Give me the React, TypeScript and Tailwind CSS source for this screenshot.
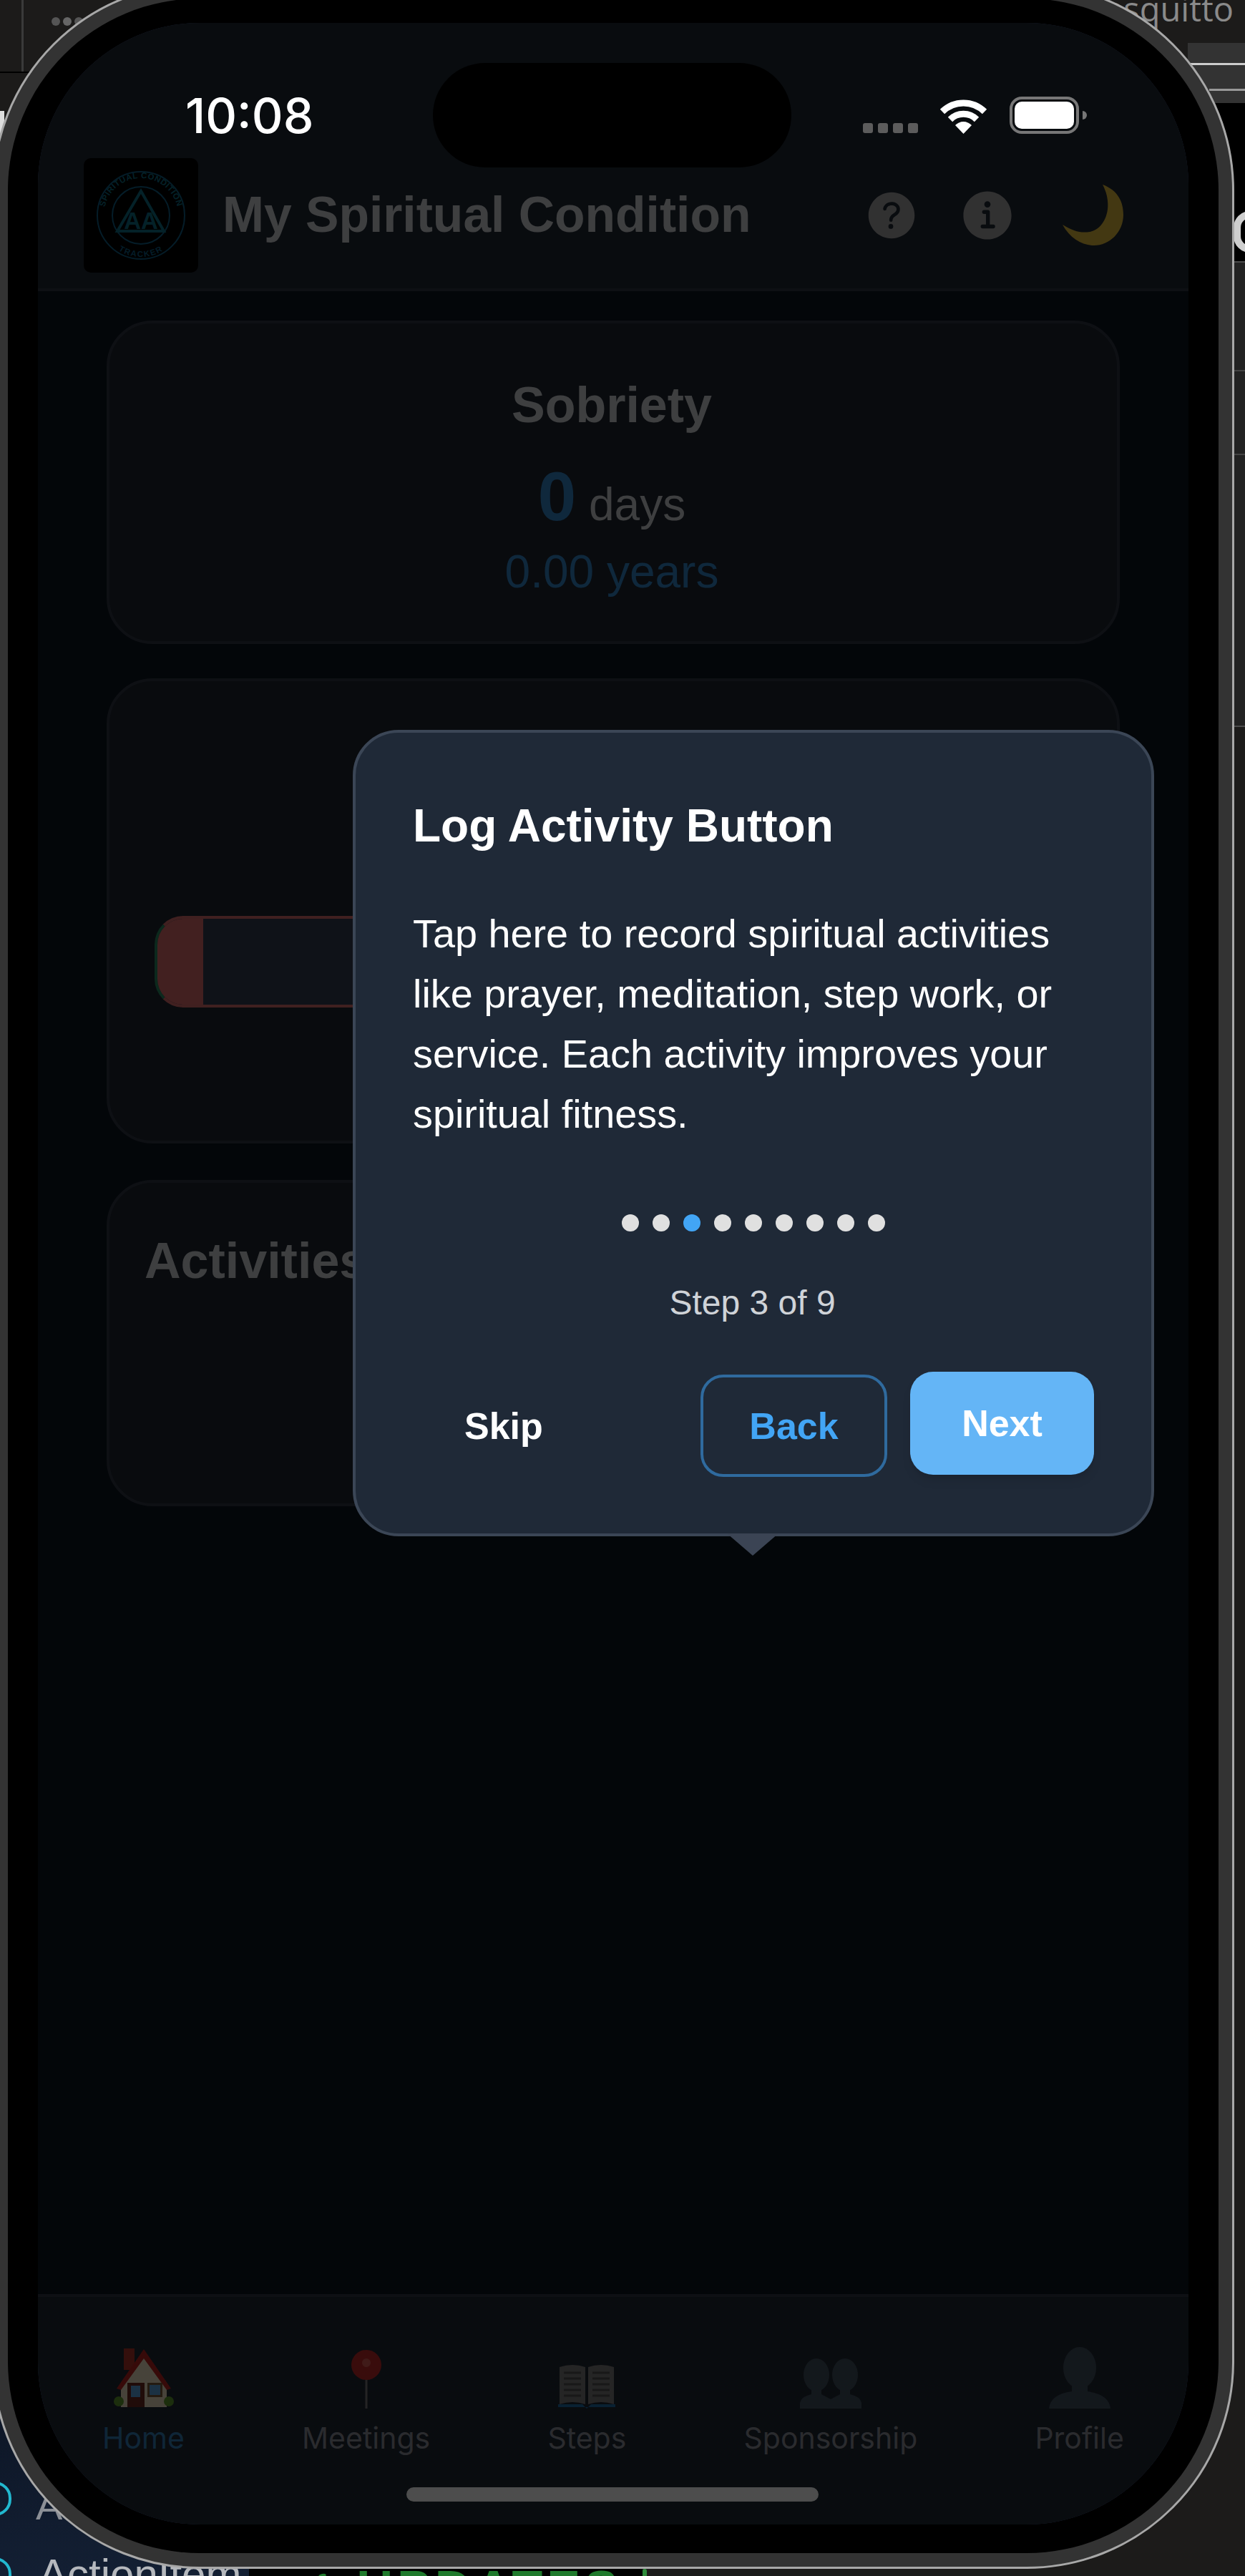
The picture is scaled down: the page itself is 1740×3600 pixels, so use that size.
import React from 'react';
import { IoHelpCircle, IoInformationCircle } from 'react-icons/io5';

const HouseIcon = () => (
  <svg width="84" height="86" viewBox="0 0 84 86">
    <rect x="14" y="2" width="15" height="30" fill="#b03228" />
    <path d="M42 6 L74 50 V84 H10 V50 Z" fill="#efe0c2" />
    <path d="M42 3 L80 58 L74 60 L42 16 L10 60 L4 58 Z" fill="#b82420" />
    <rect x="19" y="50" width="24" height="34" fill="#6d2b1f" />
    <rect x="24" y="54" width="13" height="16" fill="#5aa5e0" />
    <rect x="47" y="50" width="21" height="20" fill="#7a5a3a" />
    <rect x="50" y="53" width="15" height="14" fill="#5aa5e0" />
    <circle cx="7" cy="76" r="7" fill="#5f9a2e" />
    <circle cx="77" cy="76" r="7" fill="#5f9a2e" />
  </svg>
);

const PinIcon = () => (
  <svg width="44" height="82" viewBox="0 0 44 82">
    <rect x="20.5" y="38" width="3" height="44" fill="#7a7a7a" />
    <circle cx="22" cy="21" r="21" fill="#c02a28" />
    <circle cx="22" cy="18" r="6" fill="#d85a55" />
  </svg>
);

const BookIcon = () => (
  <svg width="80" height="64" viewBox="0 0 80 64">
    <path d="M2 6 Q20 0 38 6 V58 Q20 52 2 58 Z" fill="#7c7c7c" />
    <path d="M42 6 Q60 0 78 6 V58 Q60 52 42 58 Z" fill="#7c7c7c" />
    <path d="M0 58 H34 L40 64 L46 58 H80 V62 H0 Z" fill="#1f6fa8" />
    <path d="M8 14 H32 M8 22 H32 M8 30 H32 M8 38 H32 M8 46 H32 M48 14 H72 M48 22 H72 M48 30 H72 M48 38 H72 M48 46 H72" stroke="#505050" strokeWidth="3" />
  </svg>
);

const tabs = [
  { label: 'Home', icon: <HouseIcon />, active: true },
  { label: 'Meetings', icon: <PinIcon /> },
  { label: 'Steps', icon: <BookIcon /> },
  {
    label: 'Sponsorship',
    icon: (
      <svg width="86" height="70" viewBox="0 0 86 70" fill="#40505e">
        <ellipse cx="23" cy="23" rx="18" ry="23" />
        <ellipse cx="63" cy="23" rx="18" ry="23" />
        <path d="M16 40 H30 V50 L43 57 L56 50 V40 H70 V50 Q84 53 86 62 V70 H0 V62 Q2 53 16 50 Z" />
      </svg>
    ),
  },
  {
    label: 'Profile',
    icon: (
      <svg width="86" height="86" viewBox="0 0 86 86" fill="#40505e">
        <ellipse cx="43" cy="29" rx="23" ry="29" />
        <path d="M32 50 H54 V62 Q84 66 86 86 H0 Q2 66 32 62 Z" />
      </svg>
    ),
  },
];

const Logo = () => (
  <svg width="160" height="160" viewBox="0 0 160 160" className="rounded-[10px] bg-black">
    <defs>
      <path id="logo-top" d="M28 80 A52 52 0 0 1 132 80" />
      <path id="logo-bottom" d="M22 80 A58 58 0 0 0 138 80" />
    </defs>
    <circle cx="80" cy="80" r="61" fill="none" stroke="#0e5f86" strokeWidth="2" />
    <circle cx="80" cy="80" r="40" fill="none" stroke="#0e5f86" strokeWidth="2" />
    <path d="M80 46 L112 102 H47 Z" fill="none" stroke="#0f7088" strokeWidth="4" />
    <text x="80" y="99" textAnchor="middle" fontSize="33" fontWeight="700" fill="#0f7088">AA</text>
    <text fontSize="11.5" fontWeight="700" fill="#0f7088" letterSpacing="0.6">
      <textPath href="#logo-top" startOffset="50%" textAnchor="middle">SPIRITUAL CONDITION</textPath>
    </text>
    <text fontSize="11.5" fontWeight="700" fill="#0e5f86" letterSpacing="1.5">
      <textPath href="#logo-bottom" startOffset="50%" textAnchor="middle">TRACKER</textPath>
    </text>
  </svg>
);

// backdrop pieces of the desktop that stick out around the phone
const Desktop = () => (
  <>
    <div className="absolute left-0 top-0 flex w-[130px] flex-col">
      <div className="flex h-[102px] w-[50px] shrink-0 border-b-2 border-black pl-[30px]">
        <div className="h-full w-[3px] bg-[#3a3a3a]" />
      </div>
      <div className="mt-[53px] h-[40px] w-[6px] bg-[#ddd]" />
    </div>
    <div className="absolute left-[72px] top-[24px] flex gap-[4px]">
      <div className="h-[12px] w-[12px] rounded-full bg-[#555]" />
      <div className="h-[12px] w-[12px] rounded-full bg-[#666]" />
      <div className="h-[12px] w-[12px] rounded-full bg-[#555]" />
    </div>

    <div className="absolute right-[16px] top-[-23px] text-[47px] text-[#8a8a8a] [font-family:'Open_Sans',sans-serif]">mosquitto</div>

    <div className="absolute right-0 top-[60px] flex w-[80px] flex-col">
      <div className="flex h-[84px] flex-col items-end gap-[33px] bg-[#333] pt-[28px]">
        <div className="h-[3px] w-full bg-[#ccc]" />
        <div className="h-[3px] w-[50px] bg-[#999]" />
      </div>
      <div className="flex h-[221px] justify-end overflow-hidden bg-black pt-[151px]">
        <div className="mr-[-30px] h-[58px] w-[46px] rounded-full border-[10px] border-[#cfcfcf]" />
      </div>
      <div className="flex h-[651px] flex-col border-y-2 border-[#4c4c4c] bg-[#222]">
        <div className="h-[152px] border-b-2 border-[#444]" />
        <div className="h-[117px] border-b-2 border-[#444]" />
      </div>
    </div>

    <div className="absolute bottom-0 left-0 flex items-end">
      <div className="flex h-[320px] w-[348px] flex-col overflow-hidden bg-gradient-to-b from-[#0b1322] to-[#131f33] pt-[188px]">
        <div className="flex h-[48px] items-start">
          <div className="ml-[-30px] h-[48px] w-[46px] rounded-full border-[4px] border-[#22b8cf]" />
          <div className="ml-[34px] mt-[-8px] text-[56px] text-[#8b8f96]">A</div>
        </div>
        <div className="mt-[58px] flex items-start">
          <div className="ml-[-30px] h-[48px] w-[46px] rounded-full border-[4px] border-[#22b8cf]" />
          <div className="ml-[38px] mt-[-11px] text-[60px] leading-[70px] text-[#b5b8bd]">ActionItem</div>
        </div>
      </div>
      <div className="h-[12px] w-[550px] overflow-hidden bg-black">
        <div className="mt-[-10px] pl-[60px] text-[70px] font-bold leading-[80px] tracking-[6px] text-[#1f7a2c]">✓ UPDATES</div>
      </div>
      <div className="h-[10px] w-[6px] rounded-t-full bg-[#2e8b3a]" />
    </div>
  </>
);

const App: React.FC = () => {
  const dots = [0, 1, 2, 3, 4, 5, 6, 7, 8];

  return (
    <div className="relative h-[3600px] w-[1740px] overflow-hidden bg-[#1c1b1a] [font-family:'Liberation_Sans',Arial,sans-serif]">
      <Desktop />

      {/* phone: light rim, gray band, black bezel, screen */}
      <div className="relative ml-[-11px] mt-[-24px] h-[3614px] w-[1736px] rounded-[290px] border-[3px] border-[#a8a8a8] bg-[#333] p-[19px]">
        <div className="h-full w-full rounded-[268px] bg-black pb-[39px] pl-[42px] pr-[41px] pt-[34px]">
          <div className="relative flex h-[3496px] w-[1608px] flex-col overflow-hidden rounded-[227px] bg-[#0d1421]">
            {/* header */}
            <header className="flex h-[375px] shrink-0 items-center border-b-4 border-[#2f3643] bg-[#212835] pl-[64px] pr-[90px] pt-[166px]">
              <Logo />
              <h1 className="ml-[34px] text-[69.6px] font-bold leading-none text-[#cfd2d5]">My Spiritual Condition</h1>
              <div className="ml-auto flex items-center">
                <IoHelpCircle className="text-[86px] text-[#a4a4a4]" />
                <IoInformationCircle className="ml-[48px] text-[86px] text-[#a4a4a4]" />
                <svg width="86" height="86" viewBox="0 0 86 86" className="ml-[62px]">
                  <path d="M56 0 C78 8 85 25 85 42 C85 67 65 85 44 85 C28 85 10 75 0 56 C15 65 25 68 38 66 C60 62 72 30 56 0 Z" fill="#e0bb3c" />
                </svg>
              </div>
            </header>

            {/* cards */}
            <main className="flex-1 px-[96px] pt-[41px]">
              <section className="mb-[48px] h-[452px] rounded-[64px] border-4 border-[#2f3643] bg-[#1e2530] pr-[4px] pt-[60px] text-center">
                <h2 className="mb-[24px] text-[70px] font-bold leading-[108px] text-[#cfd2d5]">Sobriety</h2>
                <div className="mb-[-4px] text-[64px] leading-[100px] text-[#cfd2d5]">
                  <span className="text-[96px] font-bold text-[#3285c8]">0</span> days
                </div>
                <div className="text-[64px] leading-[96px] text-[#3285c8]">0.00 years</div>
              </section>

              <section className="mb-[51px] h-[650px] rounded-[64px] border-4 border-[#2f3643] bg-[#1e2530] px-[63px] pt-[328px]">
                <div className="h-[128px] overflow-hidden rounded-[40px] border-4 border-[#d86b6b] border-l-[#2a8a62] bg-[#323f50]">
                  <div className="h-full w-[64px] bg-[#dc6b6b]" />
                </div>
              </section>

              <section className="h-[456px] rounded-[64px] border-4 border-[#2f3643] bg-[#1e2530] px-[49px] pt-[55px]">
                <h2 className="text-[70px] font-bold leading-[108px] text-[#cfd2d5]">Activities</h2>
              </section>
            </main>

            {/* tabs */}
            <nav className="flex h-[322px] shrink-0 items-start justify-around border-t-4 border-[#2f3643] bg-[#212835] px-[8px] pt-[70px] [font-family:Inter,sans-serif]">
              {tabs.map(tab => (
                <div key={tab.label} className="flex flex-col items-center">
                  <div className="flex h-[86px] items-end">{tab.icon}</div>
                  <span className={`mt-[14px] text-[41px] leading-[54px] ${tab.active ? 'text-[#357fb8]' : 'text-[#8c8f99]'}`}>
                    {tab.label}
                  </span>
                </div>
              ))}
            </nav>

            {/* dim layer of the tour */}
            <div className="absolute inset-0 bg-black/70" />

            {/* status bar */}
            <div className="absolute left-0 top-[56px] flex w-full items-center">
              <div className="w-[552px] pl-[206px] text-[68px] font-medium leading-none text-white [font-family:Inter,sans-serif]">10:08</div>
              <div className="h-[146px] w-[501px] rounded-[73px] bg-black" />
              <div className="flex items-end pl-[100px]">
                <div className="mr-[30px] flex gap-[7px] pb-[1px]">
                  <div className="h-[14px] w-[14px] rounded-[3px] bg-[#5c5c5c]" />
                  <div className="h-[14px] w-[14px] rounded-[3px] bg-[#5c5c5c]" />
                  <div className="h-[14px] w-[14px] rounded-[3px] bg-[#5c5c5c]" />
                  <div className="h-[14px] w-[14px] rounded-[3px] bg-[#5c5c5c]" />
                </div>
                <svg width="67" height="50" viewBox="0 0 67 50" className="mr-[31px]">
                  <path d="M4 19 A42 42 0 0 1 63 19" fill="none" stroke="white" strokeWidth="9" />
                  <path d="M15 30 A26 26 0 0 1 52 30" fill="none" stroke="white" strokeWidth="9" />
                  <path d="M33.5 50 L22 38 A16 16 0 0 1 45 38 Z" fill="white" />
                </svg>
                <div className="h-[52px] w-[97px] rounded-[17px] border-4 border-[#777] p-[3px]">
                  <div className="h-full w-full rounded-[10px] bg-white" />
                </div>
                <div className="mb-[20px] ml-[5px] h-[12px] w-[6px] rounded-r-full bg-[#777]" />
              </div>
            </div>

            {/* tour tooltip */}
            <div className="absolute left-[440px] top-[988px] h-[1127px] w-[1120px] rounded-[64px] border-4 border-[#3b4656] bg-[#1f2937] p-[80px]">
              <h3 className="mt-[2px] text-[64px] font-bold leading-[96px] text-white">Log Activity Button</h3>
              <p className="mt-[61px] text-[55.8px] leading-[84px] text-white">
                Tap here to record spiritual activities like prayer, meditation, step work, or service. Each activity improves your spiritual fitness.
              </p>
              <div className="mt-[98px] flex justify-center gap-[19px]">
                {dots.map(i => (
                  <div key={i} className={`h-[24px] w-[24px] rounded-full ${i === 2 ? 'bg-[#42a5f5]' : 'bg-[#e0e0e0]'}`} />
                ))}
              </div>
              <div className="mt-[64px] pr-[3px] text-center text-[48px] leading-[72px] text-[#cfd3d8]">Step 3 of 9</div>
              <div className="mt-[60px] flex items-start justify-between">
                <button className="mt-[4px] h-[143px] px-[72px] text-[52px] font-bold text-white">Skip</button>
                <div className="-ml-[4px] flex items-start gap-[32px]">
                  <button className="mt-[4px] h-[143px] w-[261px] rounded-[32px] border-4 border-[#2f6a9e] text-[52px] font-bold text-[#42a5f5]">Back</button>
                  <button className="h-[144px] w-[257px] rounded-[32px] bg-[#64b5f6] text-[52px] font-bold text-white shadow-lg">Next</button>
                </div>
              </div>
              <div className="absolute left-[519px] top-full h-0 w-0 border-x-[36px] border-t-[31px] border-x-transparent border-t-[#3b4454]" />
            </div>

            {/* home indicator */}
            <div className="absolute bottom-[32px] left-[515px] h-[20px] w-[576px] rounded-full bg-[#4d4d4d]" />
          </div>
        </div>
      </div>
    </div>
  );
};

export default App;
